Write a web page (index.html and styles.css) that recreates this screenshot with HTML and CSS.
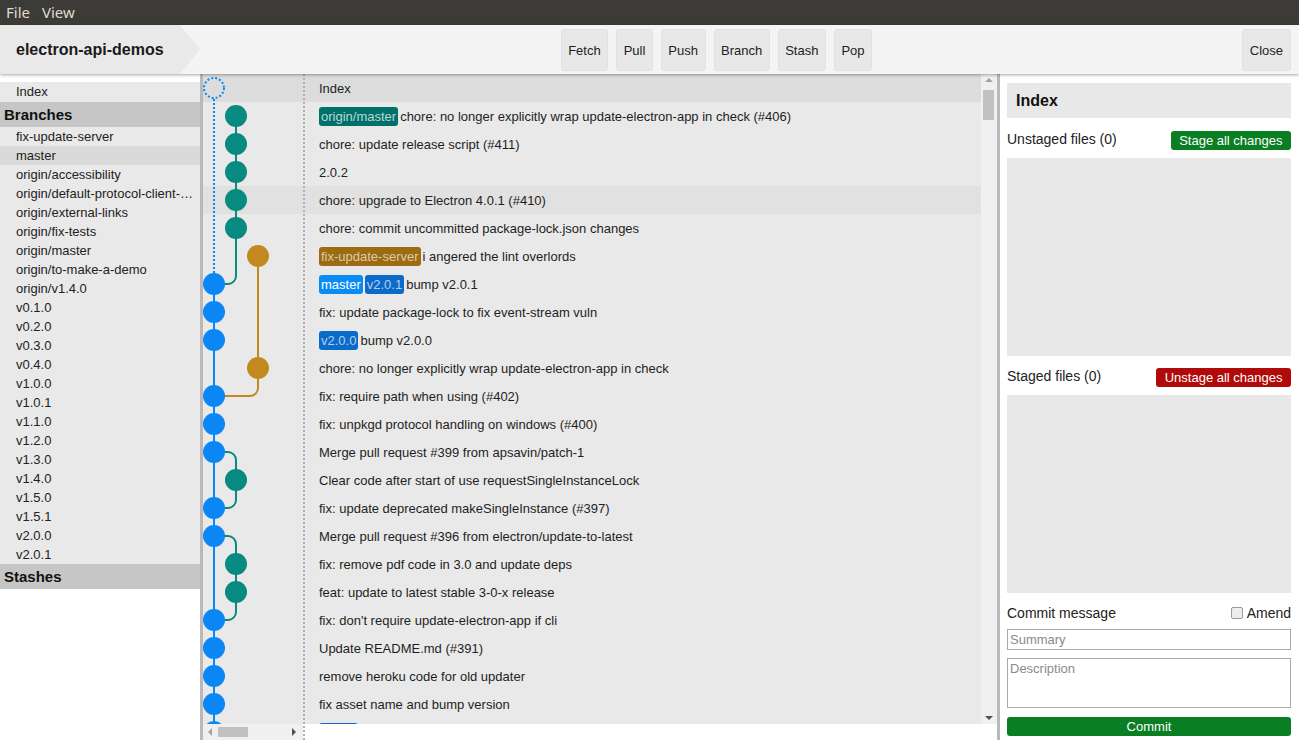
FILE: index.html
```html
<!DOCTYPE html>
<html>
<head>
<meta charset="utf-8">
<title>electron-api-demos</title>
<link rel="stylesheet" href="styles.css">
</head>
<body>
<div class="menubar"><span>File</span><span>View</span></div>
<header class="toolbar">
  <div class="repo-title">electron-api-demos</div>
  <div class="actions">
    <button class="btn">Fetch</button>
    <button class="btn">Pull</button>
    <button class="btn">Push</button>
    <button class="btn">Branch</button>
    <button class="btn">Stash</button>
    <button class="btn">Pop</button>
  </div>
  <button class="btn close">Close</button>
</header>
<main class="workspace">
  <aside class="sidebar">
    <div class="side-item index">Index</div>
    <div class="side-head">Branches</div>
    <div class="side-item">fix-update-server</div>
    <div class="side-item current">master</div>
    <div class="side-item">origin/accessibility</div>
    <div class="side-item">origin/default-protocol-client-scheme</div>
    <div class="side-item">origin/external-links</div>
    <div class="side-item">origin/fix-tests</div>
    <div class="side-item">origin/master</div>
    <div class="side-item">origin/to-make-a-demo</div>
    <div class="side-item">origin/v1.4.0</div>
    <div class="side-item">v0.1.0</div>
    <div class="side-item">v0.2.0</div>
    <div class="side-item">v0.3.0</div>
    <div class="side-item">v0.4.0</div>
    <div class="side-item">v1.0.0</div>
    <div class="side-item">v1.0.1</div>
    <div class="side-item">v1.1.0</div>
    <div class="side-item">v1.2.0</div>
    <div class="side-item">v1.3.0</div>
    <div class="side-item">v1.4.0</div>
    <div class="side-item">v1.5.0</div>
    <div class="side-item">v1.5.1</div>
    <div class="side-item">v2.0.0</div>
    <div class="side-item">v2.0.1</div>
    <div class="side-head">Stashes</div>
  </aside>

  <section class="history">
    <div class="history-body">
      <div class="rows">
        <svg class="graph" width="100" height="690" viewBox="0 0 100 690">
          <g fill="none" stroke-width="2">
            <path d="M11 25 V199" stroke="#0a87f5" stroke-dasharray="2 2"/>
            <path d="M11 210 V690" stroke="#0a87f5"/>
            <path d="M33 42 V202 A8 8 0 0 1 25 210 H11" stroke="#078a80"/>
            <path d="M55 182 V314 A8 8 0 0 1 47 322 H11" stroke="#c28a1e"/>
            <path d="M11 378 H25 A8 8 0 0 1 33 386 V426 A8 8 0 0 1 25 434 H11" stroke="#078a80"/>
            <path d="M11 462 H25 A8 8 0 0 1 33 470 V538 A8 8 0 0 1 25 546 H11" stroke="#078a80"/>
          </g>
          <circle cx="11" cy="14" r="10" fill="none" stroke="#0a87f5" stroke-width="2" stroke-dasharray="2 2"/>
          <g fill="#078a80">
            <circle cx="33" cy="42" r="11"/>
            <circle cx="33" cy="70" r="11"/>
            <circle cx="33" cy="98" r="11"/>
            <circle cx="33" cy="126" r="11"/>
            <circle cx="33" cy="154" r="11"/>
            <circle cx="33" cy="406" r="11"/>
            <circle cx="33" cy="490" r="11"/>
            <circle cx="33" cy="518" r="11"/>
          </g>
          <g fill="#c28a1e">
            <circle cx="55" cy="182" r="11"/>
            <circle cx="55" cy="294" r="11"/>
          </g>
          <g fill="#0a87f5">
            <circle cx="11" cy="210" r="11"/>
            <circle cx="11" cy="238" r="11"/>
            <circle cx="11" cy="266" r="11"/>
            <circle cx="11" cy="322" r="11"/>
            <circle cx="11" cy="350" r="11"/>
            <circle cx="11" cy="378" r="11"/>
            <circle cx="11" cy="434" r="11"/>
            <circle cx="11" cy="462" r="11"/>
            <circle cx="11" cy="546" r="11"/>
            <circle cx="11" cy="574" r="11"/>
            <circle cx="11" cy="602" r="11"/>
            <circle cx="11" cy="630" r="11"/>
            <circle cx="11" cy="658" r="11"/>
          </g>
        </svg>
        <div class="row index"><div class="msg">Index</div></div>
        <div class="row"><div class="msg"><span class="tag tag-remote">origin/master</span>chore: no longer explicitly wrap update-electron-app in check (#406)</div></div>
        <div class="row"><div class="msg">chore: update release script (#411)</div></div>
        <div class="row"><div class="msg">2.0.2</div></div>
        <div class="row hover"><div class="msg">chore: upgrade to Electron 4.0.1 (#410)</div></div>
        <div class="row"><div class="msg">chore: commit uncommitted package-lock.json changes</div></div>
        <div class="row"><div class="msg"><span class="tag tag-branch">fix-update-server</span>i angered the lint overlords</div></div>
        <div class="row"><div class="msg"><span class="tag tag-head">master</span><span class="tag tag-ver">v2.0.1</span>bump v2.0.1</div></div>
        <div class="row"><div class="msg">fix: update package-lock to fix event-stream vuln</div></div>
        <div class="row"><div class="msg"><span class="tag tag-ver">v2.0.0</span>bump v2.0.0</div></div>
        <div class="row"><div class="msg">chore: no longer explicitly wrap update-electron-app in check</div></div>
        <div class="row"><div class="msg">fix: require path when using (#402)</div></div>
        <div class="row"><div class="msg">fix: unpkgd protocol handling on windows (#400)</div></div>
        <div class="row"><div class="msg">Merge pull request #399 from apsavin/patch-1</div></div>
        <div class="row"><div class="msg">Clear code after start of use requestSingleInstanceLock</div></div>
        <div class="row"><div class="msg">fix: update deprecated makeSingleInstance (#397)</div></div>
        <div class="row"><div class="msg">Merge pull request #396 from electron/update-to-latest</div></div>
        <div class="row"><div class="msg">fix: remove pdf code in 3.0 and update deps</div></div>
        <div class="row"><div class="msg">feat: update to latest stable 3-0-x release</div></div>
        <div class="row"><div class="msg">fix: don't require update-electron-app if cli</div></div>
        <div class="row"><div class="msg">Update README.md (#391)</div></div>
        <div class="row"><div class="msg">remove heroku code for old updater</div></div>
        <div class="row"><div class="msg">fix asset name and bump version</div></div>
        <div class="row"><div class="msg"><span class="tag tag-ver">v1.5.1</span>bump v1.5.1</div></div>
      </div>
      <div class="vscroll">
        <span class="arrow arrow-up"></span>
        <span class="vthumb"></span>
        <span class="arrow arrow-down"></span>
      </div>
    </div>
    <div class="history-foot">
      <div class="hscroll">
        <span class="arrow arrow-left"></span>
        <span class="hthumb"></span>
        <span class="arrow arrow-right"></span>
      </div>
    </div>
  </section>

  <aside class="inspector">
    <div class="insp-title">Index</div>
    <div class="insp-row first">
      <span class="insp-label">Unstaged files (0)</span>
      <button class="pill pill-green">Stage all changes</button>
    </div>
    <div class="drop"></div>
    <div class="insp-row">
      <span class="insp-label">Staged files (0)</span>
      <button class="pill pill-red">Unstage all changes</button>
    </div>
    <div class="drop"></div>
    <div class="insp-row commit-row">
      <span>Commit message</span>
      <label class="amend"><span class="check"></span>Amend</label>
    </div>
    <input class="summary" type="text" placeholder="Summary">
    <textarea class="desc" placeholder="Description"></textarea>
    <button class="commit-btn">Commit</button>
  </aside>
</main>
</body>
</html>
```
FILE: styles.css
```css
* { box-sizing: border-box; }

html, body {
  margin: 0;
  width: 1299px;
  height: 740px;
  overflow: hidden;
  background: #ffffff;
}

body {
  font-family: "Liberation Sans", Arial, sans-serif;
  font-size: 13px;
  color: #222;
}

/* menu bar */
.menubar {
  height: 25px;
  background: #3c3b37;
  color: #dfdbd2;
  display: flex;
  align-items: center;
  gap: 12px;
  padding-left: 6px;
  font-family: "Noto Sans", "DejaVu Sans", sans-serif;
  font-size: 15px;
  line-height: 25px;
}

/* toolbar */
.toolbar {
  height: 49px;
  background: #f4f4f4;
  display: flex;
  position: relative;
  z-index: 2;
  box-shadow: 0 1px 3px rgba(0, 0, 0, 0.35);
}

.repo-title {
  width: 200px;
  flex: none;
  background: #e9e9e9;
  clip-path: polygon(0 0, 180px 0, 200px 50%, 180px 100%, 0 100%);
  font-weight: bold;
  font-size: 16px;
  padding-left: 16px;
  display: flex;
  align-items: center;
  color: #1a1a1a;
}

.actions {
  flex: 1;
  display: flex;
  justify-content: center;
  align-items: flex-start;
  gap: 8px;
  padding: 4px 9px 0 0;
}

.btn {
  height: 42px;
  padding: 0 6.5px;
  background: #e8e8e8;
  border: 1px solid #e1e1e1;
  border-radius: 3px;
  font-family: "Liberation Sans", Arial, sans-serif;
  font-size: 13px;
  color: #222;
}

.close {
  align-self: flex-start;
  margin: 4px 8px 0 0;
  padding: 0 7px;
}

/* workspace */
.workspace {
  display: flex;
  height: 666px;
}

.sidebar {
  width: 203px;
  flex: none;
  border-right: 3px solid #b9b9b9;
  background: #fff;
  padding-top: 8px;
}

.side-item {
  height: 19px;
  line-height: 19px;
  padding: 0 6px 0 16px;
  background: #e9e9e9;
  white-space: nowrap;
  overflow: hidden;
  text-overflow: ellipsis;
}

.side-item.index {
  height: 20px;
  line-height: 20px;
}

.side-item.current {
  background: #dadada;
}

.side-head {
  height: 25px;
  line-height: 25px;
  background: #c6c6c6;
  font-weight: bold;
  font-size: 15px;
  padding-left: 4px;
  color: #111;
}

/* history */
.history {
  flex: 1;
  display: flex;
  flex-direction: column;
  position: relative;
  background: #fff;
}

.history::after {
  content: "";
  position: absolute;
  left: 100px;
  top: 0;
  bottom: 0;
  width: 2px;
  background: repeating-linear-gradient(to bottom, #b0b0b0 0 2px, transparent 2px 4px);
}

.history-body {
  flex: 1;
  display: flex;
  min-height: 0;
}

.rows {
  flex: 1;
  position: relative;
  overflow: hidden;
  background: #e9e9e9;
}

.graph {
  position: absolute;
  left: 0;
  top: 0;
  z-index: 1;
}

.row {
  height: 28px;
  padding-left: 116px;
  display: flex;
  align-items: center;
}

.row.index { background: #dcdcdc; }
.row.hover { background: #e1e1e1; }

.msg {
  display: flex;
  align-items: center;
  gap: 2px;
  white-space: nowrap;
  color: #1e1e1e;
}

.tag {
  height: 19px;
  line-height: 19px;
  padding: 0 2px;
  border-radius: 3px;
}

.tag-remote { background: #00716a; color: #bcd6d3; }
.tag-branch { background: #9b6c14; color: #dccba6; }
.tag-head { background: #0a8cf2; color: #ffffff; }
.tag-ver { background: #0a6bcb; color: #b7cfe9; }

.vscroll {
  width: 16px;
  flex: none;
  background: #f0f0f0;
  position: relative;
}

.vthumb {
  position: absolute;
  left: 2px;
  top: 16px;
  width: 11px;
  height: 30px;
  background: #c1c1c1;
}

.arrow {
  position: absolute;
  width: 0;
  height: 0;
}

.arrow-up {
  left: 4px;
  top: 4px;
  border-left: 4px solid transparent;
  border-right: 4px solid transparent;
  border-bottom: 4px solid #a3a3a3;
}

.arrow-down {
  left: 4px;
  bottom: 4px;
  border-left: 4px solid transparent;
  border-right: 4px solid transparent;
  border-top: 4px solid #505050;
}

.history-foot {
  height: 16px;
  flex: none;
  display: flex;
  background: #fff;
}

.hscroll {
  width: 100px;
  background: #f0f0f0;
  position: relative;
}

.hthumb {
  position: absolute;
  left: 15px;
  top: 3px;
  width: 30px;
  height: 10px;
  background: #c1c1c1;
}

.arrow-left {
  left: 5px;
  top: 4px;
  border-top: 4px solid transparent;
  border-bottom: 4px solid transparent;
  border-right: 4px solid #a3a3a3;
}

.arrow-right {
  right: 7px;
  top: 4px;
  border-top: 4px solid transparent;
  border-bottom: 4px solid transparent;
  border-left: 4px solid #505050;
}

/* inspector */
.inspector {
  width: 302px;
  flex: none;
  border-left: 3px solid #b9b9b9;
  padding: 9px 8px 4px 7px;
  display: flex;
  flex-direction: column;
  background: #fff;
  font-size: 14px;
}

.insp-title {
  height: 35px;
  flex: none;
  background: #e8e8e8;
  font-weight: bold;
  font-size: 16px;
  padding-left: 9px;
  display: flex;
  align-items: center;
  color: #111;
}

.insp-row {
  height: 19px;
  flex: none;
  display: flex;
  justify-content: space-between;
  align-items: center;
  margin-top: 12px;
}

.insp-row.first { margin-top: 13px; }

.insp-label {
  line-height: 16px;
  padding-bottom: 3px;
}

.pill {
  height: 19px;
  line-height: 19px;
  padding: 0 8.5px;
  border: none;
  border-radius: 3px;
  color: #fff;
  font-family: "Liberation Sans", Arial, sans-serif;
  font-size: 13px;
}

.pill-green { background: #0a7e22; }
.pill-red { background: #b00a0a; }

.drop {
  flex: 1;
  background: #e8e8e8;
  margin-top: 8px;
}

.commit-row {
  height: 18px;
  margin-top: 11px;
}

.amend {
  display: flex;
  align-items: center;
  gap: 4px;
}

.check {
  width: 12px;
  height: 12px;
  border: 1px solid #9a9a9a;
  border-radius: 2px;
  background: #ededed;
}

.summary {
  height: 21px;
  flex: none;
  margin-top: 7px;
  border: 1px solid #a9a9a9;
  padding: 0 2px;
  font-family: "Liberation Sans", Arial, sans-serif;
  font-size: 13px;
  width: 100%;
}

.desc {
  height: 50px;
  flex: none;
  margin-top: 8px;
  border: 1px solid #a9a9a9;
  padding: 2px 2px;
  resize: none;
  font-family: "Liberation Sans", Arial, sans-serif;
  font-size: 13px;
  width: 100%;
}

.summary::placeholder,
.desc::placeholder {
  color: #8a8a8a;
}

.commit-btn {
  height: 19px;
  flex: none;
  margin-top: 9px;
  border: none;
  border-radius: 3px;
  background: #0a7e22;
  color: #fff;
  font-family: "Liberation Sans", Arial, sans-serif;
  font-size: 13px;
  padding: 0;
}
```
